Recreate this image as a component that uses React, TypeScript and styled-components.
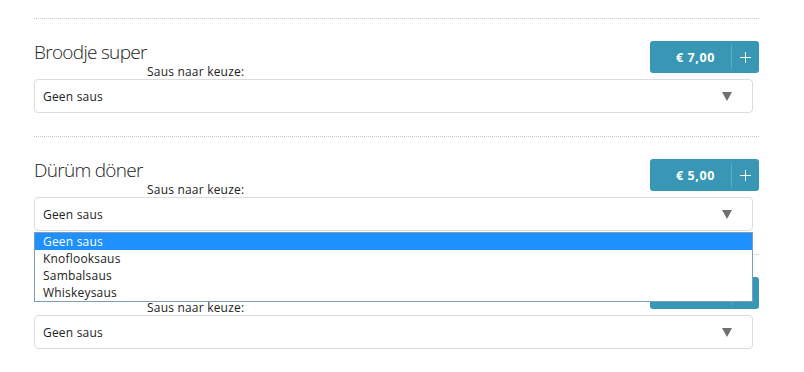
import React, { FunctionComponent, ReactElement } from 'react';
import styled, { createGlobalStyle } from 'styled-components';

const GlobalStyle = createGlobalStyle`
    html, body {
        margin: 0;
        padding: 0;
        background: #fff;
    }
    body {
        font-family: "Open Sans", "Liberation Sans", sans-serif;
        color: #222;
    }
`;

const Page = styled.div`
    padding: 18px 0 0 34px;
    width: 725px;
`;

const Item = styled.section`
    border-top: 1px dotted #c8c8c8;
    padding: 22px 0 23px;
    display: grid;
    grid-template-columns: 1fr auto;
    grid-template-rows: 23px 15px 34px;
    position: relative;
`;

const Title = styled.h2`
    grid-column: 1;
    grid-row: 1;
    margin: 0;
    font-size: 19px;
    font-weight: 300;
    line-height: 23px;
    color: #222;
    letter-spacing: -0.7px;
`;

const Label = styled.label`
    grid-column: 1;
    grid-row: 2;
    font-size: 12px;
    line-height: 15px;
    padding-left: 113px;
    letter-spacing: 0.2px;
    color: #222;
`;

const PriceButton = styled.div`
    grid-column: 2;
    grid-row: 1 / span 2;
    align-self: start;
    display: flex;
    align-items: center;
    width: 109px;
    height: 32px;
    box-sizing: border-box;
    background: #3797b5;
    border-radius: 3px;
    color: #fff;
    cursor: pointer;
`;

const Price = styled.span`
    flex: 1;
    text-align: right;
    padding-right: 16px;
    font-size: 12.5px;
    font-weight: 700;
    letter-spacing: 0.6px;
`;

const Plus = styled.span`
    width: 27px;
    height: 24px;
    border-left: 1px solid rgba(255, 255, 255, 0.2);
    display: flex;
    align-items: center;
    justify-content: center;
`;

const SelectBox = styled.div`
    grid-column: 1 / span 2;
    grid-row: 3;
    margin-right: 6px;
    border: 1px solid #dcdcdc;
    border-radius: 4px;
    display: flex;
    align-items: center;
    padding: 1px 20px 0 8px;
    font-size: 12px;
    letter-spacing: 0.2px;
    color: #222;
`;

const SelectText = styled.span`
    flex: 1;
`;

const Options = styled.ul`
    position: absolute;
    left: 0;
    right: 6px;
    top: 95px;
    margin: 0;
    padding: 0;
    list-style: none;
    background: #fff;
    border: 1px solid #7f9db9;
    z-index: 2;
    font-size: 12px;
    letter-spacing: 0.2px;
`;

const Option = styled.li<{ $active?: boolean }>`
    height: 17px;
    line-height: 17px;
    padding-left: 8px;
    background: ${(p) => (p.$active ? '#1e90ff' : '#fff')};
    color: ${(p) => (p.$active ? '#fff' : '#222')};
`;

const Arrow = () => (
    <svg width="10" height="9" viewBox="0 0 10 9">
        <path d="M0 0 H10 L5 9 Z" fill="#707070" />
    </svg>
);

const PlusIcon = () => (
    <svg width="11" height="11" viewBox="0 0 11 11">
        <path d="M5.5 0 V11 M0 5.5 H11" stroke="#fff" strokeWidth="1" />
    </svg>
);

const sauces = ['Geen saus', 'Knoflooksaus', 'Sambalsaus', 'Whiskeysaus'];

interface ProductProps {
    name: string;
    price: string;
    open?: boolean;
}

const Product: FunctionComponent<ProductProps> = ({ name, price, open }): ReactElement => (
    <Item>
        <Title>{name}</Title>
        <PriceButton role="button">
            <Price>€ {price}</Price>
            <Plus><PlusIcon /></Plus>
        </PriceButton>
        <Label>Saus naar keuze:</Label>
        <SelectBox>
            <SelectText>Geen saus</SelectText>
            <Arrow />
        </SelectBox>
        {open && (
            <Options>
                {sauces.map((s, i) => (
                    <Option key={s} $active={i === 0}>{s}</Option>
                ))}
            </Options>
        )}
    </Item>
);

export default function App(): ReactElement {
    return (
        <>
            <GlobalStyle />
            <Page>
                <Product name="Broodje super" price="7,00" />
                <Product name="Dürüm döner" price="5,00" open />
                <Product name="Dürüm kip" price="5,00" />
            </Page>
        </>
    );
}
